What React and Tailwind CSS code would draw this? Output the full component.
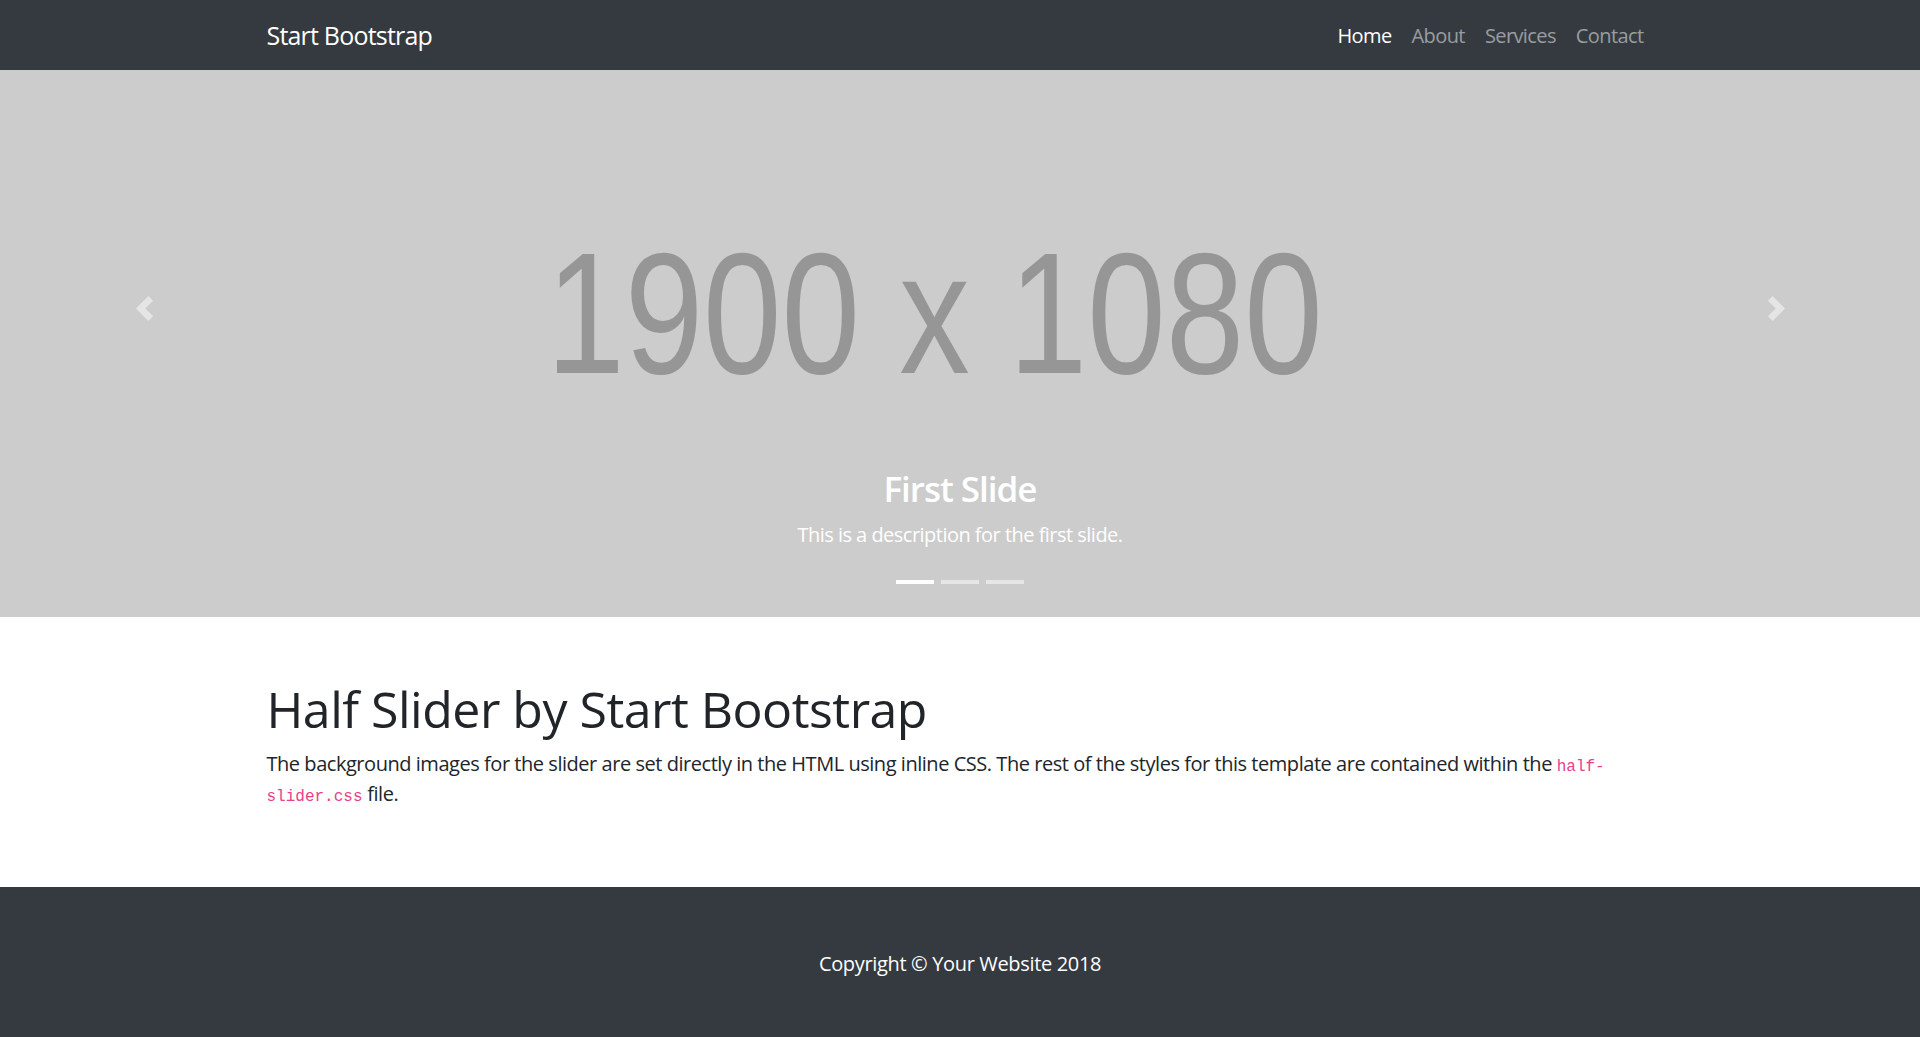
import React from "react";

const NAV = ["Home", "About", "Services", "Contact"];

function Chevron({ dir }) {
  return (
    <svg viewBox="0 0 8 8" className="w-[25px] h-[25px]" fill="#fff">
      {dir === "prev" ? (
        <path d="M5.25 0l-4 4 4 4 1.5-1.5-2.5-2.5 2.5-2.5-1.5-1.5z" />
      ) : (
        <path d="M2.75 0l-1.5 1.5 2.5 2.5-2.5 2.5 1.5 1.5 4-4-4-4z" />
      )}
    </svg>
  );
}

export default function App() {
  return (
    <div className="min-h-[1037px] flex flex-col bg-white text-[#212529]" style={{ fontFamily: '"Open Sans", "Noto Sans", sans-serif' }}>
      {/* Navbar */}
      <nav className="h-[70px] bg-[#343a40] flex-shrink-0">
        <div className="w-[1425px] mx-auto px-[19px] pt-[1px] h-full flex items-center justify-between">
          <a className="text-[25px] text-white leading-none tracking-[-0.032em]">Start Bootstrap</a>
          <ul className="flex items-center">
            {NAV.map((n, i) => (
              <li key={n}>
                <a className={`block px-[10px] text-[20px] leading-none tracking-[-0.03em] ${i === 0 ? "text-white" : "text-white/50"}`}>{n}</a>
              </li>
            ))}
          </ul>
        </div>
      </nav>

      {/* Carousel */}
      <header className="relative h-[547px] bg-[#cccccc] overflow-hidden flex-shrink-0">
        <div className="absolute inset-0 pr-[51px] pt-[157px] flex justify-center">
          <div className="scale-x-[0.82] text-[172px] leading-none text-[#969696] whitespace-nowrap" style={{ fontFamily: '"Liberation Sans", Arial, sans-serif' }}>
            1900 x 1080
          </div>
        </div>

        <a className="absolute left-0 top-0 bottom-0 w-[15%] pb-[70px] flex items-center justify-center opacity-50">
          <Chevron dir="prev" />
        </a>
        <a className="absolute right-0 top-0 bottom-0 w-[15%] pb-[70px] flex items-center justify-center opacity-50">
          <Chevron dir="next" />
        </a>

        <div className="absolute left-[15%] right-[15%] bottom-[22px] py-[25px] text-center text-white">
          <h3 className="text-[35px] font-semibold leading-[1.2] mb-[10px] tracking-[-0.029em]">First Slide</h3>
          <p className="text-[20px] leading-[1.5] mb-[20px] tracking-[-0.026em]">This is a description for the first slide.</p>
        </div>

        <ol className="absolute left-0 right-0 bottom-[33px] flex justify-center gap-[7px]">
          <li className="w-[38px] h-[4px] bg-white" />
          <li className="w-[38px] h-[4px] bg-white/50" />
          <li className="w-[38px] h-[4px] bg-white/50" />
        </ol>
      </header>

      {/* Page content */}
      <section className="pt-[62px] pb-[58px]">
        <div className="w-[1425px] mx-auto px-[19px]">
          <h1 className="text-[50px] font-medium leading-[1.2] mb-[10px] tracking-[-0.01em]">Half Slider by Start Bootstrap</h1>
          <p className="text-[20px] leading-[1.5] mb-[20px] tracking-[-0.023em]">
            The background images for the slider are set directly in the HTML using inline CSS. The rest of the styles for this template are contained within the{" "}
            <code className="text-[16px] text-[#e83e8c] tracking-normal" style={{ fontFamily: '"Liberation Mono", "DejaVu Sans Mono", monospace' }}>
              half-<br />slider.css
            </code>{" "}
            file.
          </p>
        </div>
      </section>

      {/* Footer */}
      <footer className="flex-1 bg-[#343a40] pt-[62px] pb-[58px]">
        <p className="text-center text-white text-[20px] leading-[1.5] tracking-[-0.017em]">Copyright © Your Website 2018</p>
      </footer>
    </div>
  );
}
